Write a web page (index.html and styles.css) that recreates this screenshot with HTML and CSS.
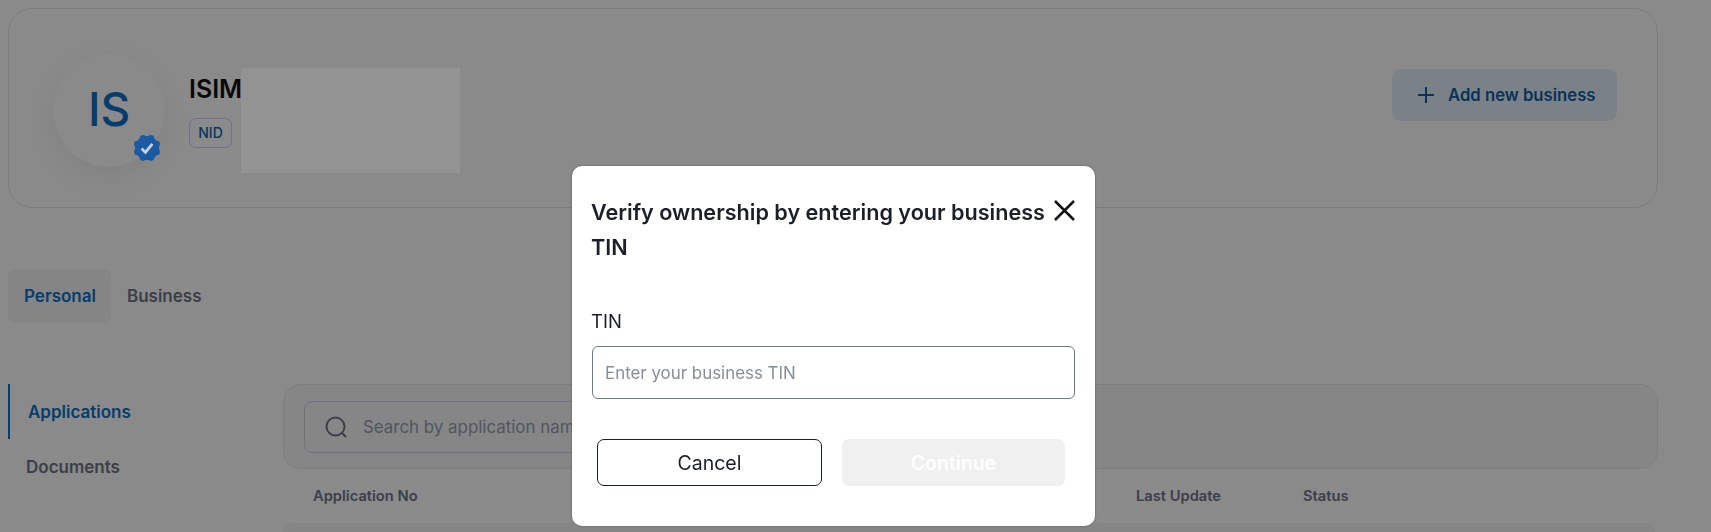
FILE: index.html
```html
<!DOCTYPE html>
<html lang="en">

<head>
    <meta charset="UTF-8">
    <meta name="viewport" content="width=device-width, initial-scale=1.0">
    <title>Profile</title>
    <link rel="stylesheet" href="styles.css">
</head>

<body>
    <div class="page">
        <section class="profile-card">
            <div class="avatar">
                IS
                <svg class="verified" width="28" height="28" viewBox="0 0 28 28">
                    <g fill="#1a5aa5">
                        <circle cx="14" cy="14" r="12" />
                        <circle cx="23.6" cy="10" r="3.3" />
                        <circle cx="23.6" cy="18" r="3.3" />
                        <circle cx="4.4" cy="10" r="3.3" />
                        <circle cx="4.4" cy="18" r="3.3" />
                        <circle cx="10" cy="4.4" r="3.3" />
                        <circle cx="18" cy="4.4" r="3.3" />
                        <circle cx="10" cy="23.6" r="3.3" />
                        <circle cx="18" cy="23.6" r="3.3" />
                    </g>
                    <polyline points="8.6,14.6 12.4,18.4 19.4,9.8" fill="none" stroke="#c8d0da" stroke-width="2.8" />
                </svg>
            </div>
            <div class="identity">
                <div class="name">ISIM</div>
                <span class="id-tag">NID</span>
            </div>
            <div class="redacted"></div>
            <button class="add-btn">
                <svg width="18" height="18" viewBox="0 0 18 18">
                    <path d="M9 1v16M1 9h16" stroke="#125da3" stroke-width="2" fill="none" />
                </svg>
                Add new business
            </button>
        </section>

        <nav class="tabs">
            <a class="tab active">Personal</a>
            <a class="tab">Business</a>
        </nav>

        <div class="content">
            <aside class="side-nav">
                <a class="side-link active">Applications</a>
                <a class="side-link">Documents</a>
            </aside>
            <main class="list">
                <div class="search-panel">
                    <div class="search-box">
                        <svg width="22" height="22" viewBox="0 0 22 22">
                            <circle cx="10.5" cy="10.5" r="9" stroke="#6f7585" stroke-width="2" fill="none" />
                            <path d="M17 17l4 4" stroke="#6f7585" stroke-width="2" fill="none" />
                        </svg>
                        <span class="search-text">Search by application name</span>
                    </div>
                </div>
                <div class="table-head">
                    <span>Application No</span>
                    <span>Last Update</span>
                    <span>Status</span>
                </div>
                <div class="table-row"></div>
            </main>
        </div>
    </div>

    <div class="overlay"></div>

    <div class="modal">
        <div class="modal-head">
            <h2>Verify ownership by entering your business TIN</h2>
            <button class="close-btn">
                <svg width="21" height="21" viewBox="0 0 21 21">
                    <path d="M1 1l19 19M20 1L1 20" stroke="#111" stroke-width="2.5" fill="none" />
                </svg>
            </button>
        </div>
        <label class="field-label" for="tin">TIN</label>
        <input class="field-input" id="tin" type="text" placeholder="Enter your business TIN">
        <div class="modal-actions">
            <button class="cancel-btn">Cancel</button>
            <button class="continue-btn" disabled>Continue</button>
        </div>
    </div>
</body>

</html>
```

FILE: styles.css
```css
* {
    box-sizing: border-box;
}

html,
body {
    height: 532px;
    overflow: hidden;
}

body {
    margin: 0;
    font-family: Inter, "Liberation Sans", sans-serif;
    background-color: #fff;
    color: #6f7585;
}

.page {
    padding: 8px 53px 0 8px;
}

.profile-card {
    position: relative;
    display: flex;
    align-items: center;
    height: 200px;
    padding: 3px 40px 0 44px;
    border: 1px solid #e6e6e6;
    border-radius: 24px;
}

.avatar {
    display: flex;
    align-items: center;
    justify-content: center;
    width: 112px;
    height: 114px;
    padding-bottom: 2px;
    border: 1px solid #fafafa;
    border-radius: 50%;
    font-size: 46px;
    font-weight: 500;
    color: #0c72c8;
    box-shadow: 0 10px 30px rgba(0, 0, 0, 0.07);
    position: relative;
}

/* these two sit above the dimming layer in the reference */
.verified {
    position: absolute;
    left: 79px;
    bottom: 4px;
    z-index: 20;
}

.redacted {
    position: absolute;
    left: 232px;
    top: 59px;
    width: 219px;
    height: 105px;
    background-color: #939393;
    z-index: 20;
}

.identity {
    margin-left: 24px;
    padding-top: 1px;
}

.name {
    font-size: 25px;
    font-weight: 600;
    line-height: 32px;
    color: #121212;
}

.id-tag {
    display: inline-block;
    margin-top: 13px;
    width: 43px;
    height: 30px;
    border: 1px solid #d0cdfa;
    border-radius: 7px;
    font-size: 14px;
    font-weight: 500;
    line-height: 28px;
    text-align: center;
    color: #0c66b4;
}

.add-btn {
    display: flex;
    align-items: center;
    gap: 13px;
    height: 52px;
    width: 225px;
    margin-left: auto;
    margin-bottom: 30px;
    padding: 0 0 0 25px;
    border: none;
    border-radius: 9px;
    background-color: #e2f1fc;
    font-family: inherit;
    font-size: 16.7px;
    font-weight: 600;
    color: #125da3;
    white-space: nowrap;
}

.tabs {
    display: flex;
    margin-top: 61px;
}

.tab {
    display: flex;
    align-items: center;
    height: 54px;
    padding: 0 15px 0 16px;
    border-radius: 6px;
    font-size: 17px;
    font-weight: 600;
}

.tab.active {
    background-color: #f6f6f6;
    color: #0c72c8;
}

.content {
    display: flex;
    margin-top: 61px;
}

.side-nav {
    display: flex;
    flex-direction: column;
    width: 275px;
}

.side-link {
    display: flex;
    align-items: center;
    height: 55px;
    padding-left: 18px;
    font-size: 17px;
    font-weight: 600;
}

.side-link.active {
    padding-left: 18px;
    border-left: 2px solid #0c72c8;
    color: #0c72c8;
}

.list {
    flex: 1;
}

.search-panel {
    height: 85px;
    padding: 16px 20px;
    border: 1px solid #e9e9e9;
    border-radius: 18px;
    background-color: #f8f8f8;
}

.search-box {
    display: flex;
    align-items: center;
    gap: 16px;
    width: 700px;
    height: 52px;
    padding-left: 20px;
    border: 1px solid #cfd5eb;
    border-radius: 8px;
}

.search-text {
    font-size: 16.9px;
    color: #949fb0;
}

.table-head {
    display: grid;
    grid-template-columns: 823px 167px auto;
    height: 54px;
    align-items: center;
    padding-left: 30px;
    font-size: 14.7px;
    font-weight: 600;
}

.table-row {
    height: 9px;
    margin-right: 3px;
    border-radius: 8px 8px 0 0;
    background-color: #f6f6f6;
}

.overlay {
    position: fixed;
    inset: 0;
    z-index: 10;
    background-color: rgba(0, 0, 0, 0.46);
}

.modal {
    position: absolute;
    left: 572px;
    top: 166px;
    z-index: 30;
    width: 523px;
    height: 360px;
    padding: 29px 20px 0;
    border-radius: 10px;
    background-color: #fff;
    color: #1b1f27;
    box-shadow: 0 0 2px rgba(0, 0, 0, 0.4);
}

.modal-head {
    display: flex;
    align-items: flex-start;
    justify-content: space-between;
}

.modal-head h2 {
    width: 462px;
    margin: 0 0 0 -1px;
    font-size: 21.6px;
    font-weight: 600;
    line-height: 35px;
}

.close-btn {
    padding: 0;
    margin-top: 5px;
    border: none;
    background: none;
    line-height: 0;
}

.field-label {
    display: block;
    margin: 41px 0 0 -1px;
    font-size: 18.5px;
    line-height: 30px;
}

.field-input {
    display: block;
    width: 483px;
    height: 53px;
    margin-top: 10px;
    padding: 0 12px;
    border: 1px solid #6b7a90;
    border-radius: 6px;
    font-family: inherit;
    font-size: 16.9px;
    outline: none;
}

.field-input::placeholder {
    color: #868e96;
}

.modal-actions {
    display: flex;
    gap: 20px;
    margin-top: 40px;
    padding: 0 10px 0 5px;
}

.modal-actions button {
    flex: 1;
    height: 47px;
    border-radius: 7px;
    font-family: inherit;
    font-size: 19.5px;
}

.cancel-btn {
    border: 1px solid #1b1f27;
    background-color: #fff;
    color: #1b1f27;
}

.continue-btn {
    border: none;
    background-color: #f0f0f0;
    color: #fff;
    font-weight: 600;
}
```
